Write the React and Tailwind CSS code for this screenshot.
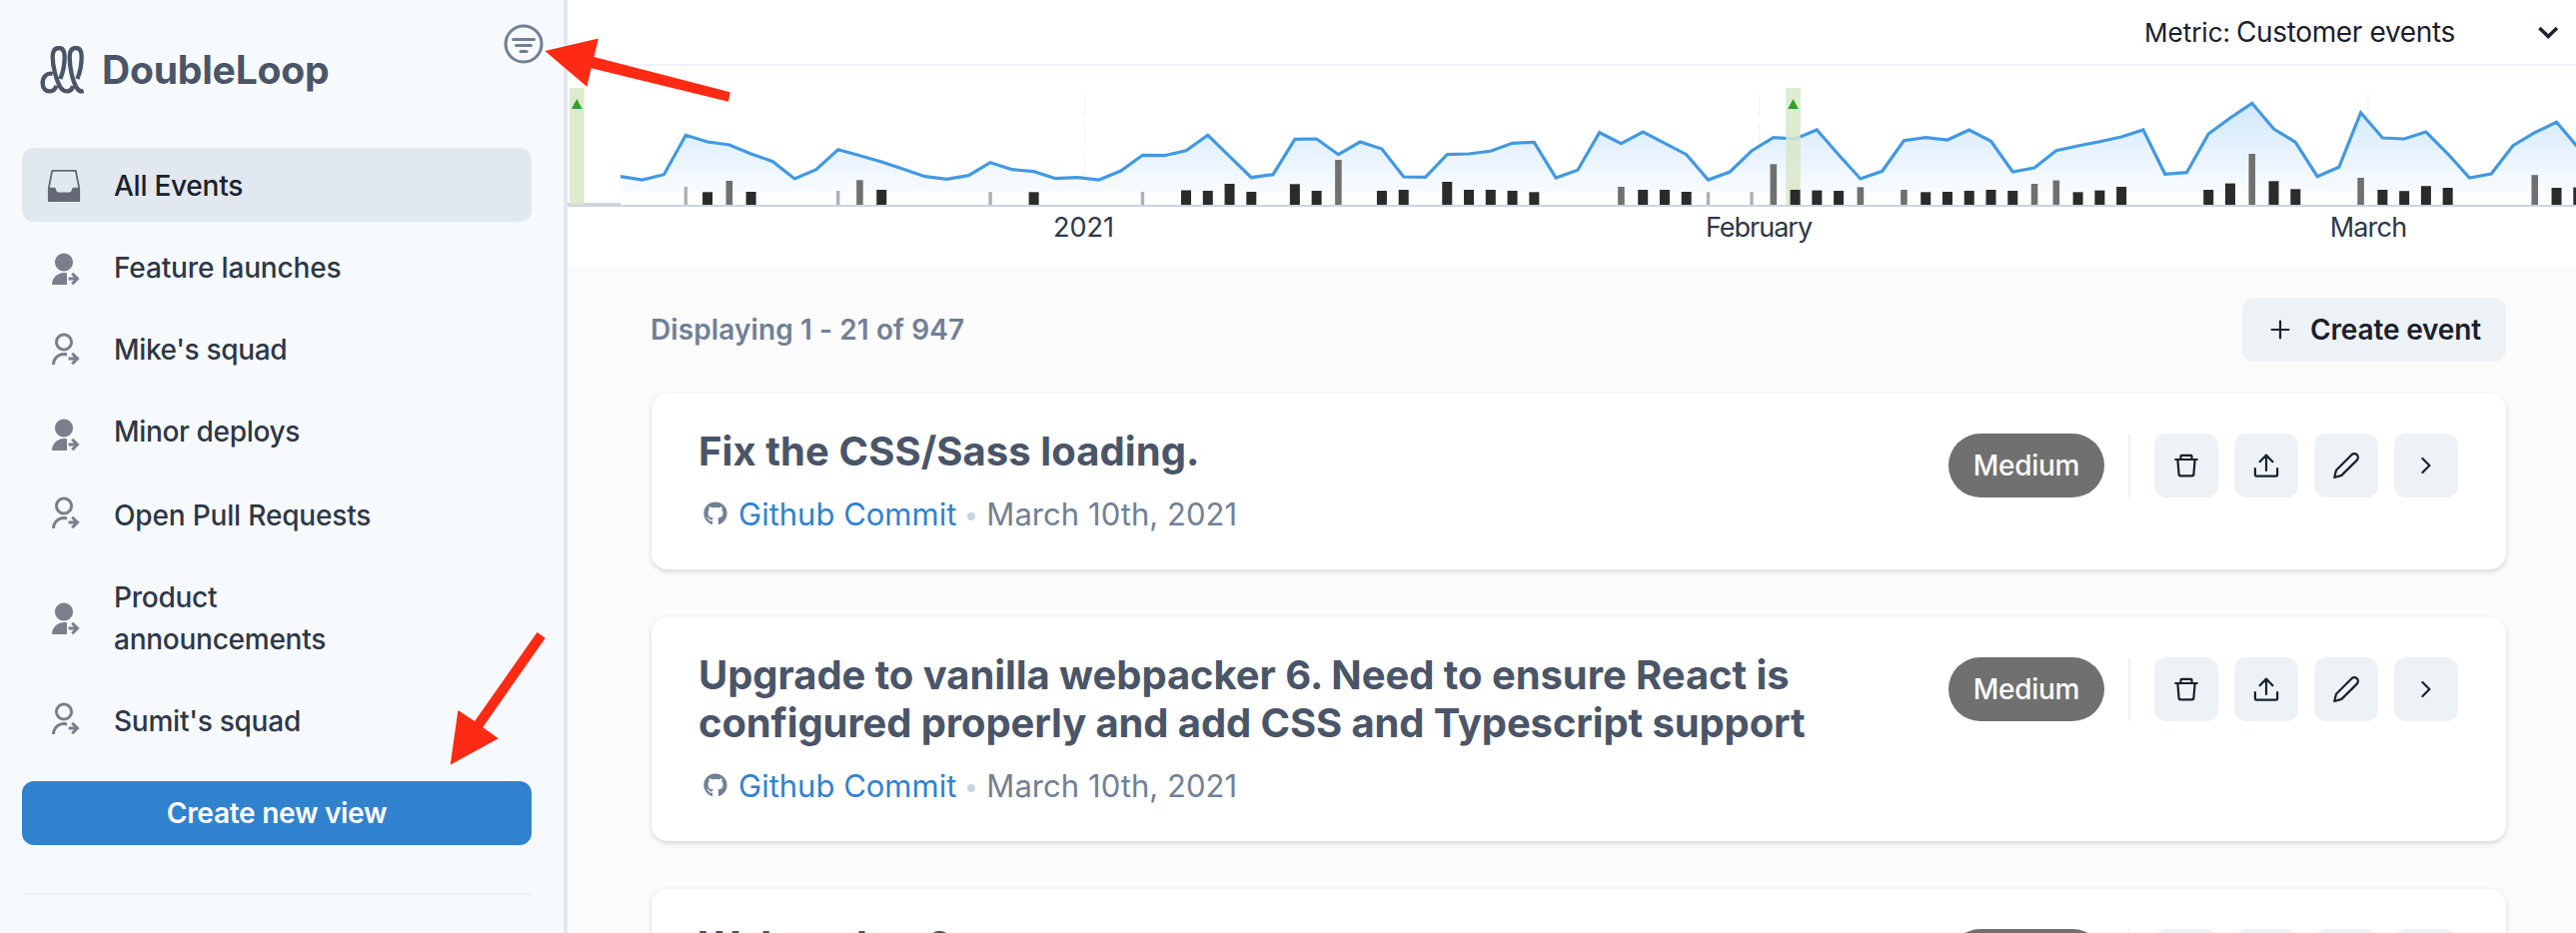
import React from 'react';
import { RiUserSharedFill, RiUserSharedLine } from 'react-icons/ri';
import { IoFilterCircleOutline } from 'react-icons/io5';
import { FaGithub } from 'react-icons/fa';

const views = [
  { label: 'Feature launches', filled: true, box: 'mt-2 pb-[15px]', icon: 'mt-[5px]', text: 'tracking-[-0.15px]' },
  { label: "Mike's squad", filled: false, box: 'mt-2 pb-[15px]', icon: 'mt-[3px]', text: 'tracking-[-0.34px]' },
  { label: 'Minor deploys', filled: true, box: 'mt-2 pb-[15px]', icon: 'mt-[7px]', text: 'tracking-[-0.34px]' },
  { label: 'Open Pull Requests', filled: false, box: 'mt-[9px] pb-[15px]', icon: 'mt-px', text: 'tracking-[-0.16px]' },
  { label: 'Product announcements', filled: true, box: 'mt-2 pb-[15px]', icon: 'mt-[25px]', text: 'w-[240px] tracking-[-0.25px]' },
  { label: "Sumit's squad", filled: false, box: 'mt-2 pb-[15px]', icon: 'mt-px', text: 'tracking-[-0.24px]' },
];

const START = 621;
const STEP = 21.77;
const BASE = 205;

const series = [
  176.7, 180, 174.7, 135.3, 142, 145, 154, 161.7, 179, 169.7, 149.7, 155.7, 162, 169.3, 176.7, 179.3, 175.7, 162.7,
  169.7, 171.7, 178.7, 177.7, 180, 171, 155.3, 155.7, 150.7, 135.3, 156.7, 177.7, 174.7, 139.3, 139, 154.7, 142, 149,
  177, 177.3, 154.7, 154, 151.3, 143.3, 142.3, 178, 170.3, 132.7, 143.7, 132, 143.3, 154.7, 180, 172, 151, 137.7, 139,
  130, 155, 179, 171.3, 140.7, 137.7, 140, 130, 141.3, 172, 168, 150.7, 146, 141.7, 137, 130, 174.3, 172.7, 134, 118,
  103.3, 129, 142.3, 176.7, 167.3, 112.7, 138, 139, 132, 154, 178, 174, 145.7, 132.7, 122.3, 148,
];

const kinds = {
  t: { width: 3.4, fill: '#b0b0b0' },
  m: { width: 6.6, fill: '#707070' },
  d: { width: 10, fill: '#2b2b2b' },
};

const bars = [
  [3, 't', 187], [4, 'd', 192.3], [5, 'm', 181], [6, 'd', 192], [10, 't', 191], [11, 'm', 180.3], [12, 'd', 190],
  [17, 't', 192], [19, 'd', 192.3], [24, 't', 192], [26, 'd', 190.5], [27, 'd', 191], [28, 'd', 184], [29, 'd', 192],
  [31, 'd', 184.3], [32, 'd', 191], [33, 'm', 160], [35, 'd', 191], [36, 'd', 190], [38, 'd', 182], [39, 'd', 190],
  [40, 'd', 190], [41, 'd', 191], [42, 'd', 192.3], [46, 'm', 187], [47, 'd', 190], [48, 'd', 190], [49, 'd', 192],
  [50, 't', 192.3], [52, 't', 192], [53, 'm', 164.3], [54, 'd', 190], [55, 'd', 190.6], [56, 'd', 191], [57, 'm', 187.3],
  [59, 'm', 190], [60, 'd', 192.3], [61, 'd', 192], [62, 'd', 191], [63, 'd', 190], [64, 'd', 191], [65, 'm', 184],
  [66, 'm', 180.6], [67, 'd', 192.3], [68, 'd', 190.6], [69, 'd', 187], [73, 'd', 190], [74, 'd', 183.6], [75, 'm', 154],
  [76, 'd', 181.3], [77, 'd', 189.3], [80, 'm', 178], [81, 'd', 190], [82, 'd', 191.2], [83, 'd', 186.2], [84, 'd', 188],
  [88, 'm', 175.2], [89, 'd', 188], [90, 'd', 187.6],
];

const xAt = (i) => START + STEP * i;
const line = series.map((y, i) => `${xAt(i).toFixed(1)},${y}`).join(' ');
const area = `${START},${BASE} ${line} ${xAt(series.length - 1).toFixed(1)},${BASE}`;

function Logo() {
  return (
    <svg className="h-12 w-11 shrink-0" viewBox="30 78 132 144" fill="none" stroke="#4a5568" strokeWidth="13">
      <path d="M68 162C50 157 38 172 38 190C38 207 48 214 58 214C70 214 77 207 79 197" />
      <path d="M91 177C98 160 104 132 104 110C104 92 98 84 87 84C75 84 68 92 68 110C68 140 79 180 90 200C96 210 102 214 110 214C121 214 127 208 129 198" />
      <path d="M142 177C149 160 155 132 155 110C155 92 149 84 138 84C126 84 119 92 119 110C119 145 128 184 141 205C147 213 153 216 161 213" />
    </svg>
  );
}

function InboxIcon() {
  return (
    <svg className="h-9 w-9 shrink-0" viewBox="0 0 36 36">
      <path d="M6.2 2.8H29.8L33.2 20V33.2H2.8V20Z" fill="none" stroke="#646874" strokeWidth="1.8" strokeLinejoin="round" />
      <path d="M2 19.8H8.6C10.4 19.8 9.8 24.6 12.4 24.6H23.6C26.2 24.6 25.6 19.8 27.4 19.8H34V32.8Q34 34 32.8 34H3.2Q2 34 2 32.8Z" fill="#646874" />
    </svg>
  );
}

function Sidebar() {
  return (
    <aside className="h-full w-[568px] shrink-0 border-r-4 border-[#e2e8f0] bg-[#f7fafd] pl-[22px] pr-8">
      <div className="-mr-4 flex h-[148px] items-start justify-between pt-5">
        <div className="ml-[18px] mt-[26px] flex items-center gap-[18px]">
          <Logo />
          <span className="text-[39px] font-bold leading-[48px] tracking-[-0.18px] text-[#4a5568]">DoubleLoop</span>
        </div>
        <IoFilterCircleOutline className="h-12 w-12 text-[#718096]" />
      </div>
      <nav className="text-[28px] font-medium leading-[42px] text-[#2d3748]">
        <div className="flex gap-8 rounded-xl bg-[#e2e8f0] pb-[15px] pl-6 pt-[17px] text-[#1a202c]">
          <div className="mt-[3px] h-9">
            <InboxIcon />
          </div>
          <span className="tracking-[-0.25px]">All Events</span>
        </div>
        {views.map((v) => {
          const Icon = v.filled ? RiUserSharedFill : RiUserSharedLine;
          return (
            <div key={v.label} className={`flex gap-8 pl-6 pt-[17px] ${v.box}`}>
              <div className={`h-9 ${v.icon}`}>
                <Icon className="h-9 w-9 text-[#7b7f8b]" />
              </div>
              <span className={v.text}>{v.label}</span>
            </div>
          );
        })}
      </nav>
      <button className="mt-6 block h-16 w-full rounded-xl bg-[#3182ce] text-[28px] font-semibold tracking-[-0.27px] text-white">
        Create new view
      </button>
      <hr className="mt-12 border-t-2 border-[#edf2f7]" />
    </aside>
  );
}

function Marker({ x }) {
  return (
    <g>
      <rect x={x} y="88" width="14.7" height="117" fill="#d7e7c8" fillOpacity="0.85" />
      <path d={`M${x + 7.3} 99L${x + 12.6} 109H${x + 2}Z`} fill="#33a02c" />
    </g>
  );
}

function Chart() {
  return (
    <svg className="block h-[200px] w-full shrink-0 bg-white" viewBox="568 66 2010 200" fill="none">
      <defs>
        <linearGradient id="area" gradientUnits="userSpaceOnUse" x1="0" y1="103" x2="0" y2="205">
          <stop offset="0" stopColor="#cfe8fb" />
          <stop offset="0.5" stopColor="#e8f3fd" />
          <stop offset="1" stopColor="#ffffff" />
        </linearGradient>
      </defs>
      {[1085.5, 1760.5, 2370].map((x) => (
        <path key={x} d={`M${x} 94V205`} stroke="#edf4fb" strokeWidth="1.4" strokeDasharray="22 8" />
      ))}
      <path d="M568 206H2578" stroke="#cbd5e0" strokeWidth="2" />
      <path d="M568 204H621" stroke="#cbd5e0" strokeWidth="2" />
      <polygon points={area} fill="url(#area)" />
      <polyline points={line} stroke="#4299e1" strokeWidth="3.2" />
      <Marker x={570} />
      <Marker x={1787.2} />
      {bars.map(([i, kind, top]) => (
        <rect
          key={i}
          x={xAt(i) - kinds[kind].width / 2}
          y={top}
          width={kinds[kind].width}
          height={BASE - top}
          fill={kinds[kind].fill}
        />
      ))}
      <g fill="#2d3748" fontSize="27" textAnchor="middle">
        <text x="1084.5" y="236.7">2021</text>
        <text x="1760" y="236.7" letterSpacing="-1">February</text>
        <text x="2370" y="236.7" letterSpacing="-0.8">March</text>
      </g>
    </svg>
  );
}

const actionIcons = [
  <>
    <path d="M5.2 10H26.8M10.5 10V6.6Q10.5 5.8 11.3 5.8H20.7Q21.5 5.8 21.5 6.6V10" />
    <path d="M7.4 10L8.6 25Q8.8 26.4 10.2 26.4H21.8Q23.2 26.4 23.4 25L24.6 10" />
  </>,
  <path key="share" d="M16 21V6M9.6 12.2L16 5.6L22.4 12.2M4.9 19.2V25.2Q4.9 26.6 6.3 26.6H25.7Q27.1 26.6 27.1 25.2V19.2" />,
  <path key="edit" d="M6 20.8L21.5 5.3A3.7 3.7 0 0 1 26.8 10.6L11.4 25.9L4.2 28Z" />,
  <path key="open" d="M12.4 9L19.4 16L12.4 23" />,
];

function EventCard({ title, tracking }) {
  return (
    <article className="flex items-start justify-between rounded-2xl bg-white pb-[31px] pl-[47px] pr-12 pt-[34px] shadow-[0_2px_6px_rgba(0,0,0,0.1),0_2px_4px_rgba(0,0,0,0.06)]">
      <div>
        <h2 className="text-[40px] font-bold leading-[48px] text-[#4a5568]">
          {title.map((t, i) => (
            <span key={t} className={`block whitespace-nowrap ${tracking[i]}`}>
              {t}
            </span>
          ))}
        </h2>
        <div className="mt-[15px] flex items-center pl-[5px] text-[31px] leading-[48px] text-[#718096]">
          <FaGithub className="-mt-0.5 h-6 w-6" />
          <a className="ml-[11px] text-[#3182ce]">Github Commit</a>
          <span className="ml-[11px] mt-1 h-2 w-2 rounded-full bg-[#cbd5e0]" />
          <span className="ml-[11px] tracking-[0.05px]">March 10th, 2021</span>
        </div>
      </div>
      <div className="mt-1.5 flex gap-4">
        <span className="mr-2 flex h-16 w-[156px] items-center justify-center rounded-full bg-[#707070] text-[28px] font-medium tracking-[-0.3px] text-white">
          Medium
        </span>
        <span className="mr-2 w-0.5 bg-[#edf2f7]" />
        {actionIcons.map((icon, i) => (
          <button key={i} className="flex h-16 w-16 items-center justify-center rounded-xl bg-[#edf2f7]">
            <svg
              className="h-8 w-8"
              viewBox="0 0 32 32"
              fill="none"
              stroke="#1a202c"
              strokeWidth="2.2"
              strokeLinecap="round"
              strokeLinejoin="round"
            >
              {icon}
            </svg>
          </button>
        ))}
      </div>
    </article>
  );
}

export default function App() {
  return (
    <div className="relative flex h-[934px] w-[2578px] overflow-hidden bg-[#fbfbfb] font-['Inter',sans-serif]">
      <Sidebar />
      <main className="flex min-w-0 flex-1 flex-col">
        <header className="flex h-[66px] shrink-0 items-center justify-end border-b-2 border-[#edf2f7] bg-white pr-4 text-[#1a202c]">
          <span className="w-[92px] pt-px text-[26px]">Metric:</span>
          <span className="w-[300px] text-[28px] tracking-[-0.36px]">Customer events</span>
          <svg className="h-6 w-6" viewBox="0 0 24 24" fill="none" stroke="#1a202c" strokeWidth="3.5">
            <path d="M3.4 8L12.2 16.6L21 8" />
          </svg>
        </header>
        <Chart />
        <section className="flex shrink-0 flex-col pl-[84px] pr-[70px] pt-8">
          <div className="flex items-center justify-between">
            <p className="-ml-px text-[28px] font-semibold tracking-[0.1px] text-[#718096]">Displaying 1 - 21 of 947</p>
            <button className="flex h-16 w-[264px] items-center justify-end gap-3.5 rounded-xl bg-[#edf2f7] pr-[25px] text-[28px] font-semibold tracking-[-0.15px] text-[#1a202c]">
              <svg className="h-8 w-8" viewBox="0 0 32 32" stroke="#1a202c" strokeWidth="2.2" strokeLinecap="round">
                <path d="M16 7.6V24.4M7.6 16H24.4" />
              </svg>
              Create event
            </button>
          </div>
          <div className="mt-8 flex flex-col gap-12">
            <EventCard title={['Fix the CSS/Sass loading.']} tracking={['tracking-[0.07px]']} />
            <EventCard
              title={[
                'Upgrade to vanilla webpacker 6. Need to ensure React is',
                'configured properly and add CSS and Typescript support',
              ]}
              tracking={['tracking-[-0.07px]', 'tracking-[-0.12px]']}
            />
            <EventCard title={['Webpacker 6']} tracking={['-mt-px tracking-[-0.5px]']} />
          </div>
        </section>
      </main>
      <svg className="pointer-events-none absolute inset-0 h-full w-full" viewBox="0 0 2578 934" fill="#ff2a14">
        <polygon points="545.3,51 598.9,38.6 594.5,57 730.7,92.3 729,101.7 591.7,68.3 587.3,86.7" />
        <polygon points="450.6,765.7 458.4,711 475,722 537.5,633 545.7,638.7 483.2,728 498.7,739.3" />
      </svg>
    </div>
  );
}
